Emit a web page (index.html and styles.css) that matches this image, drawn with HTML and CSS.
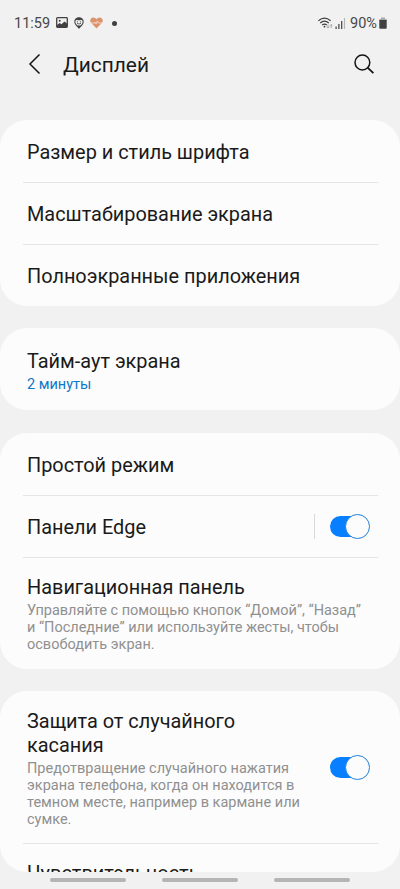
FILE: index.html
```html
<!DOCTYPE html>
<html lang="ru">
<head>
<meta charset="utf-8">
<meta name="viewport" content="width=device-width, initial-scale=1">
<title>Дисплей</title>
<link rel="stylesheet" href="styles.css">
</head>
<body>
<div class="statusbar">
  <span class="clock">11:59</span>
  <svg class="i-photo" width="12" height="11" viewBox="0 0 12 11"><rect x=".7" y=".7" width="10.6" height="9.6" rx=".8" fill="none" stroke="#404040" stroke-width="1.3"/><circle cx="3.7" cy="3.8" r="1" fill="#404040"/><path d="M1 10V8l2.7-2 1.8 1.2L8.5 4.500 11 6.500V10z" fill="#404040"/></svg>
  <svg class="i-face" width="10" height="12" viewBox="0 0 10 12"><path d="M5 .7a4.200 4.200 0 0 1 4.200 4.200C9.200 7.500 7 8.500 5 11 3 8.500.8 7.500.8 4.900A4.200 4.200 0 0 1 5 .7z" fill="none" stroke="#404040" stroke-width="1.100"/><path d="M1.200 3.700Q2 .8 5 .8t3.800 2.900L7 2.700Q5 3.700 3 2.700zM3.300 8.500h3.400L5 11.500z" fill="#404040"/><circle cx="3.500" cy="4.800" r=".6" fill="#404040"/><circle cx="6.500" cy="4.800" r=".6" fill="#404040"/><path d="M3 6.300q2 1.500 4 0" fill="none" stroke="#404040" stroke-width=".8"/></svg>
  <svg class="i-heart" width="13" height="12" viewBox="0 0 13 12"><path d="M6.500 11.500 1.200 6C-.8 3.800.6.500 3.300.5c1.400 0 2.500.7 3.200 1.900C7.200 1.200 8.300.5 9.700.5c2.700 0 4.100 3.300 2.100 5.500z" fill="#dd936b"/><path d="M1 6h3.200l.8-1 1 2 1.400-3 1 2H12" fill="none" stroke="#f8e5da" stroke-width=".8"/></svg>
  <span class="dot"></span>
  <span class="spacer"></span>
  <svg class="i-wifi" width="15" height="13" viewBox="0 0 15 13" fill="none" stroke="#404040" stroke-width="1.200"><path d="M.4 3.700q6.100-5.300 12.200 0M2.200 6q4.300-3.600 8.600 0M4.200 8q2.300-1.800 4.600 0"/><circle cx="6.500" cy="9.700" r=".9" fill="#404040" stroke="none"/><path d="M10 7.500v3.500M8.700 9.700 10 11l1.300-1.300M13.200 11V7.500M12 8.700l1.200-1.200 1.200 1.200" stroke="#999" stroke-width=".8"/></svg>
  <svg class="i-signal" width="11" height="11" viewBox="0 0 11 11"><path d="M.5 8.500h1.200V11H.5zM3.300 6h1.200v5H3.300zM6.100 3h1.200v8H6.100z" fill="#404040"/><path d="M8.900 0h1.200v11H8.900z" fill="#b5b5b5"/></svg>
  <span class="percent">90%</span>
  <svg class="i-battery" width="8" height="12" viewBox="0 0 8 12"><path d="M2 .5h4V2h1.700v2H.3V2H2z" fill="#aaa"/><path d="M.3 3h7.400v8q0 .7-.7.700H1q-.7 0-.7-.7z" fill="#404040"/></svg>
</div>
<header class="header">
  <svg class="back" width="14" height="22" viewBox="0 0 14 22" fill="none" stroke="#151515" stroke-width="1.500"><path d="M12.500 1.500 3 11l9.500 9.500"/></svg>
  <h1>Дисплей</h1>
  <svg class="search" width="22" height="22" viewBox="0 0 22 22" fill="none" stroke="#151515"><circle cx="9.400" cy="9.500" r="7.400" stroke-width="1.500"/><path d="m14.600 14.700 5.800 5.500" stroke-width="1.800"/></svg>
</header>
<main class="list">
  <section class="card">
    <div class="row"><h2>Размер и стиль шрифта</h2></div>
    <div class="row"><h2>Масштабирование экрана</h2></div>
    <div class="row"><h2>Полноэкранные приложения</h2></div>
  </section>
  <section class="card">
    <div class="row timeout"><h2>Тайм-аут экрана</h2><p class="value">2 минуты</p></div>
  </section>
  <section class="card">
    <div class="row"><h2>Простой режим</h2></div>
    <div class="row with-switch"><h2>Панели Edge</h2><span class="vline"></span><span class="switch"><span class="knob"></span></span></div>
    <div class="row detail"><h2>Навигационная панель</h2><p>Управляйте с помощью кнопок “Домой”, “Назад”<br>и “Последние” или используйте жесты, чтобы<br>освободить экран.</p></div>
  </section>
  <section class="card last">
    <div class="row with-switch protect"><div class="copy"><h2>Защита от случайного<br>касания</h2><p>Предотвращение случайного нажатия<br>экрана телефона, когда он находится в<br>темном месте, например в кармане или<br>сумке.</p></div><span class="switch"><span class="knob"></span></span></div>
    <div class="row cut"><h2>Чувствительность</h2></div>
  </section>
</main>
<nav class="navbar"><span></span><span></span><span></span></nav>
</body>
</html>
```
FILE: styles.css
```css
* { box-sizing: border-box; }
body {
  margin: 0;
  width: 400px;
  height: 889px;
  overflow: hidden;
  display: flex;
  flex-direction: column;
  background: #f1f1f1;
  color: #1a1a1a;
  font-family: Roboto, "Liberation Sans", sans-serif;
}
h1, h2, p { margin: 0; font-weight: 400; white-space: nowrap; }
svg { flex: none; display: block; }
.statusbar {
  height: 46px;
  padding: 0 13px 0 14px;
  display: flex;
  align-items: center;
  color: #484848;
  font-size: 14.5px;
}
.clock { width: 42px; }
.i-photo { margin-bottom: 1px; }
.i-face { margin-left: 6px; }
.i-heart { margin-left: 6px; margin-bottom: 1px; }
.dot { width: 5px; height: 5px; margin-left: 9px; border-radius: 50%; background: #404040; }
.spacer { flex: 1; }
.i-wifi { margin-right: 2px; }
.i-signal { margin-right: 4px; }
.percent { width: 28px; margin-right: 1px; }
.header {
  height: 37px;
  padding: 0 25px 0 27px;
  display: flex;
  align-items: center;
}
.back, .search { margin-bottom: 1px; }
.header h1 { flex: 1; margin-left: 22px; font-size: 20.9px; line-height: 24px; }
.list { display: flex; flex-direction: column; gap: 22.500px; margin-top: 36.500px; }
.card { border-radius: 27px; background: #fcfcfc; }
.row {
  height: 62px;
  margin: 0 22px 0 23px;
  padding: 4px 8px 0 4px;
  display: flex;
  flex-direction: column;
  justify-content: center;
}
.row + .row { border-top: 1px solid #e5e5e5; }
h2 { font-size: 19.9px; line-height: 24px; }
p { margin-top: 2px; color: #909090; font-size: 14.5px; line-height: 17px; }
.value { color: #0c78c8; }
.timeout { height: 82px; }
.detail { height: 112px; padding-top: 2px; }
.with-switch { flex-direction: row; align-items: center; }
.with-switch h2, .copy { flex: 1; }
.vline { width: 1px; height: 25px; margin: 0 15px 4px 0; background: #d9d9d9; }
.switch {
  position: relative;
  width: 40px;
  height: 25px;
  margin-bottom: 4px;
  display: flex;
  align-items: center;
  justify-content: flex-end;
}
.switch::before {
  content: "";
  position: absolute;
  left: 0;
  top: 2px;
  width: 36px;
  height: 21px;
  border-radius: 11px;
  background: #087fff;
}
.knob { position: relative; width: 25px; height: 25px; border: 1px solid #1f80d8; border-radius: 50%; background: #fcfcfc; }
.last { height: 181px; overflow: hidden; }
.protect { height: 152px; }
.cut { justify-content: flex-start; padding-top: 18px; }
.navbar { display: flex; justify-content: space-between; padding: 6px 50px 0; }
.navbar span { width: 76px; height: 4px; border-radius: 2px; background: #b5b5b5; }
```
